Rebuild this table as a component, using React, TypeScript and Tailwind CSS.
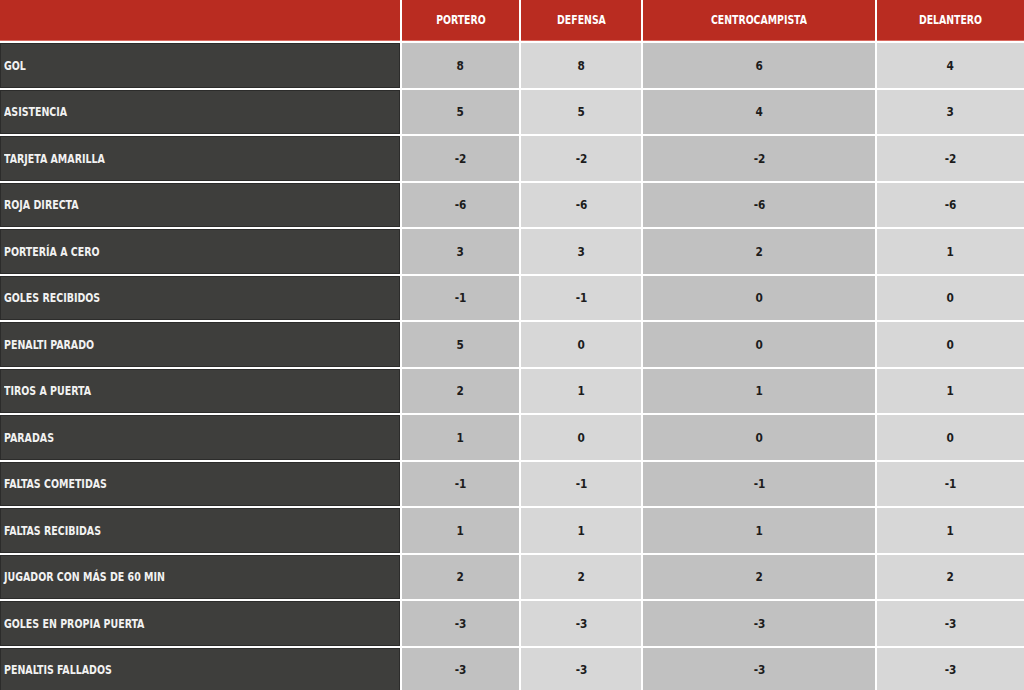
const headers = ["PORTERO", "DEFENSA", "CENTROCAMPISTA", "DELANTERO"];

const rows: [string, string[]][] = [
  ["GOL", ["8", "8", "6", "4"]],
  ["ASISTENCIA", ["5", "5", "4", "3"]],
  ["TARJETA AMARILLA", ["-2", "-2", "-2", "-2"]],
  ["ROJA DIRECTA", ["-6", "-6", "-6", "-6"]],
  ["PORTERÍA A CERO", ["3", "3", "2", "1"]],
  ["GOLES RECIBIDOS", ["-1", "-1", "0", "0"]],
  ["PENALTI PARADO", ["5", "0", "0", "0"]],
  ["TIROS A PUERTA", ["2", "1", "1", "1"]],
  ["PARADAS", ["1", "0", "0", "0"]],
  ["FALTAS COMETIDAS", ["-1", "-1", "-1", "-1"]],
  ["FALTAS RECIBIDAS", ["1", "1", "1", "1"]],
  ["JUGADOR CON MÁS DE 60 MIN", ["2", "2", "2", "2"]],
  ["GOLES EN PROPIA PUERTA", ["-3", "-3", "-3", "-3"]],
  ["PENALTIS FALLADOS", ["-3", "-3", "-3", "-3"]],
];

const cellBg = ["bg-[#c1c1c1]", "bg-[#d7d7d7]", "bg-[#c1c1c1]", "bg-[#d7d7d7]"];

export default function App() {
  return (
    <main className="h-[690px] w-[1024px] overflow-hidden bg-white font-['DejaVu_Sans_Condensed',sans-serif]">
      <div className="grid grid-cols-[400px_117px_120px_232px_147px] grid-rows-[41px_repeat(14,44.5px)] gap-[2px]">
        {/* header */}
        <div className="border-b border-[#d9695f] bg-[#b92c21]" />
        {headers.map((h) => (
          <div
            key={h}
            className="flex items-center justify-center border-b border-[#d9695f] bg-[#b92c21] text-[13px] font-bold text-white"
          >
            <span className="inline-block origin-center scale-x-[0.8]">{h}</span>
          </div>
        ))}

        {rows.map(([label, vals]) => (
          <div key={label} className="contents">
            <div className="flex items-center border border-[#2c2c2b] bg-[#3e3e3c] pl-[3px] text-[13px] font-bold text-[#f2f2f2]">
              <span className="inline-block origin-left scale-x-[0.81] whitespace-nowrap">{label}</span>
            </div>
            {vals.map((v, i) => (
              <div
                key={i}
                className={`flex items-center justify-center ${cellBg[i]} text-[13px] font-bold text-[#1c1c1c]`}
              >
                <span className="inline-block origin-center scale-x-[0.9]">{v}</span>
              </div>
            ))}
          </div>
        ))}
      </div>
    </main>
  );
}
